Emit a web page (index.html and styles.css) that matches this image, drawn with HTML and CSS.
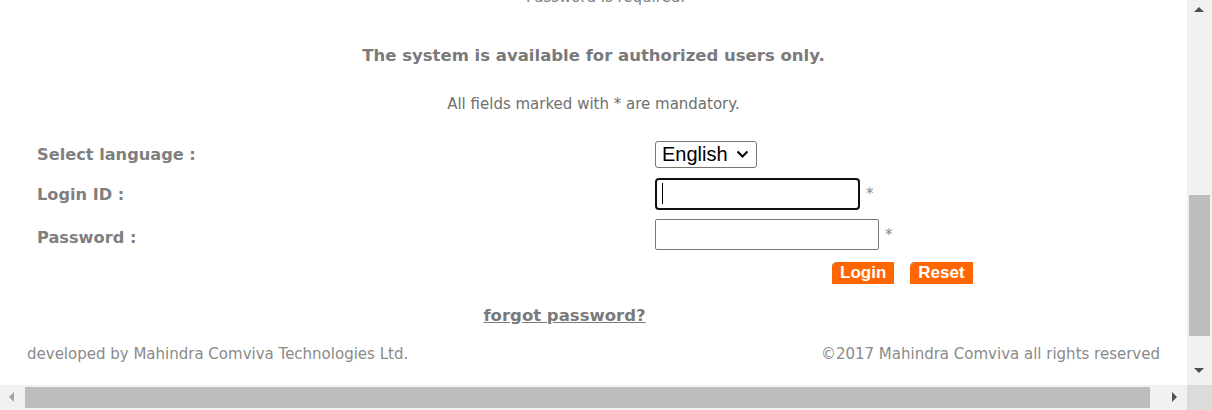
FILE: index.html
```html
<!DOCTYPE html>
<html lang="en">
<head>
<meta charset="utf-8">
<title>Login</title>
<link rel="stylesheet" href="styles.css">
</head>
<body>
<main class="page">
  <p class="error">Password is required.</p>
  <p class="notice">The system is available for authorized users only.</p>
  <p class="mandatory">All fields marked with * are mandatory.</p>
  <div class="form">
    <div class="row row-lang">
      <label class="label" for="lang">Select language :</label>
      <div class="field">
        <span class="select-wrap">
          <select id="lang" class="select"><option>English</option></select>
          <svg class="chev" width="13" height="9" viewBox="0 0 13 9" aria-hidden="true"><polyline points="1.5,1.5 6.5,6.5 11.5,1.5" fill="none" stroke="#000" stroke-width="2"/></svg>
        </span>
      </div>
    </div>
    <div class="row row-login">
      <label class="label" for="login">Login ID :</label>
      <div class="field">
        <span class="input-wrap">
          <input id="login" class="input input-login input-focus" type="text">
          <span class="caret"></span>
        </span>
        <span class="req">*</span>
      </div>
    </div>
    <div class="row row-pass">
      <label class="label" for="pass">Password :</label>
      <div class="field">
        <input id="pass" class="input input-pass" type="password">
        <span class="req">*</span>
      </div>
    </div>
  </div>
  <div class="actions">
    <button class="btn" type="button">Login</button>
    <button class="btn" type="button">Reset</button>
  </div>
  <p class="forgot"><a href="#">forgot password?</a></p>
  <footer class="footer">
    <span>developed by Mahindra Comviva Technologies Ltd.</span>
    <span>©2017 Mahindra Comviva all rights reserved</span>
  </footer>
</main>
<div class="vscroll">
  <span class="arrow arrow-up"></span>
  <span class="vthumb"></span>
  <span class="arrow arrow-down"></span>
</div>
<div class="hscroll">
  <span class="arrow arrow-left"></span>
  <span class="hthumb"></span>
  <span class="arrow arrow-right"></span>
</div>
<div class="corner"></div>
</body>
</html>
```
FILE: styles.css
```css
html, body {
  margin: 0;
  padding: 0;
  overflow: hidden;
  background: #fff;
}
body {
  width: 1212px;
  height: 410px;
  font-family: "DejaVu Sans", Verdana, sans-serif;
  color: #808080;
}
.page {
  width: 1187px;
  height: 385px;
  overflow: hidden;
}
.page p { margin: 0; }
.error {
  text-align: center;
  font-size: 15px;
  line-height: 16px;
  padding-left: 24px;
  margin-top: -11px !important;
}
.notice {
  text-align: center;
  font-weight: bold;
  font-size: 16.5px;
  line-height: 20px;
  margin-top: 41px !important;
  color: #7a7a7a;
}
.mandatory {
  text-align: center;
  font-size: 15px;
  line-height: 20px;
  margin-top: 28px !important;
  color: #707070;
}
.form {
  margin-top: 20px;
  padding-left: 37px;
}
.row {
  display: grid;
  grid-template-columns: 618px 1fr;
  align-items: center;
  height: 40px;
}
.row-pass { margin-top: 2px; height: 42px; }
.label {
  font-weight: bold;
  font-size: 16.2px;
  color: #7f7f7f;
  padding-top: 1px;
}
.field {
  display: flex;
  align-items: center;
}
.select-wrap {
  position: relative;
  display: inline-block;
  height: 27px;
}
.select {
  box-sizing: border-box;
  width: 102px;
  height: 27px;
  appearance: none;
  -webkit-appearance: none;
  font-family: "Liberation Sans", Arial, sans-serif;
  font-size: 20px;
  line-height: 25px;
  padding: 0 0 0 6px;
  border: 1px solid #767676;
  border-radius: 3px;
  background: #fff;
  color: #000;
}
.chev {
  position: absolute;
  left: 81px;
  top: 9px;
  pointer-events: none;
}
.input-wrap { position: relative; display: inline-block; }
.input {
  box-sizing: border-box;
  border: 1px solid #767676;
  border-radius: 2px;
  background: #fff;
  font-size: 14px;
  padding: 0 4px;
}
.input-login {
  width: 205px;
  height: 32px;
}
.input-focus {
  border: 2px solid #101010;
  border-radius: 4px;
  outline: none;
}
.input-pass {
  width: 224px;
  height: 31px;
  margin-top: -5px;
}
.caret {
  position: absolute;
  left: 7px;
  top: 5px;
  width: 1px;
  height: 21px;
  background: #000;
}
.req {
  margin-left: 6px;
  font-size: 15px;
  color: #8a8a8a;
}
.row-pass .req { margin-top: -4px; }
.actions {
  display: flex;
  gap: 16px;
  padding-left: 832px;
  margin-top: 4px;
}
.btn {
  position: relative;
  box-sizing: border-box;
  height: 22px;
  padding: 0 8px;
  border: none;
  border-radius: 0;
  background: #ff6600;
  color: #fff;
  font-family: "Liberation Sans", Arial, sans-serif;
  font-weight: bold;
  font-size: 17px;
  line-height: 22px;
}
.btn::before {
  content: "";
  position: absolute;
  left: 0;
  top: 0;
  width: 6px;
  height: 6px;
  background: linear-gradient(135deg, #fff 0 1.5px, #c89a78 1.5px 3px, transparent 3.5px);
}
.forgot {
  text-align: center;
  padding-right: 58px;
  margin-top: 22px !important;
  line-height: 20px;
}
.forgot a {
  color: #7a7a7a;
  font-weight: bold;
  font-size: 16.5px;
  text-decoration: underline;
}
.footer {
  display: flex;
  justify-content: space-between;
  padding: 0 27px;
  margin-top: 18px;
  font-size: 15px;
  line-height: 20px;
  color: #8a8a8a;
}
/* painted scrollbars */
.vscroll {
  position: fixed;
  left: 1187px;
  top: 0;
  width: 25px;
  height: 385px;
  background: #f1f1f1;
}
.vthumb {
  position: absolute;
  left: 2px;
  top: 195px;
  width: 21px;
  height: 141px;
  background: #bdbdbd;
}
.hscroll {
  position: fixed;
  left: 0;
  top: 385px;
  width: 1187px;
  height: 25px;
  background: #f1f1f1;
}
.hthumb {
  position: absolute;
  left: 25px;
  top: 2px;
  width: 1125px;
  height: 21px;
  background: #bdbdbd;
}
.corner {
  position: fixed;
  left: 1187px;
  top: 385px;
  width: 25px;
  height: 25px;
  background: #dcdcdc;
}
.arrow {
  position: absolute;
  width: 0;
  height: 0;
  border: 5px solid transparent;
}
.arrow-up { left: 7px; top: 7px; border-top: 0; border-bottom: 5px solid #505050; }
.arrow-down { left: 7px; top: 368px; border-bottom: 0; border-top: 5px solid #505050; }
.arrow-left { left: 9px; top: 7px; border-left: 0; border-right: 5px solid #a3a3a3; }
.arrow-right { left: 1172px; top: 7px; border-right: 0; border-left: 5px solid #505050; }
```
